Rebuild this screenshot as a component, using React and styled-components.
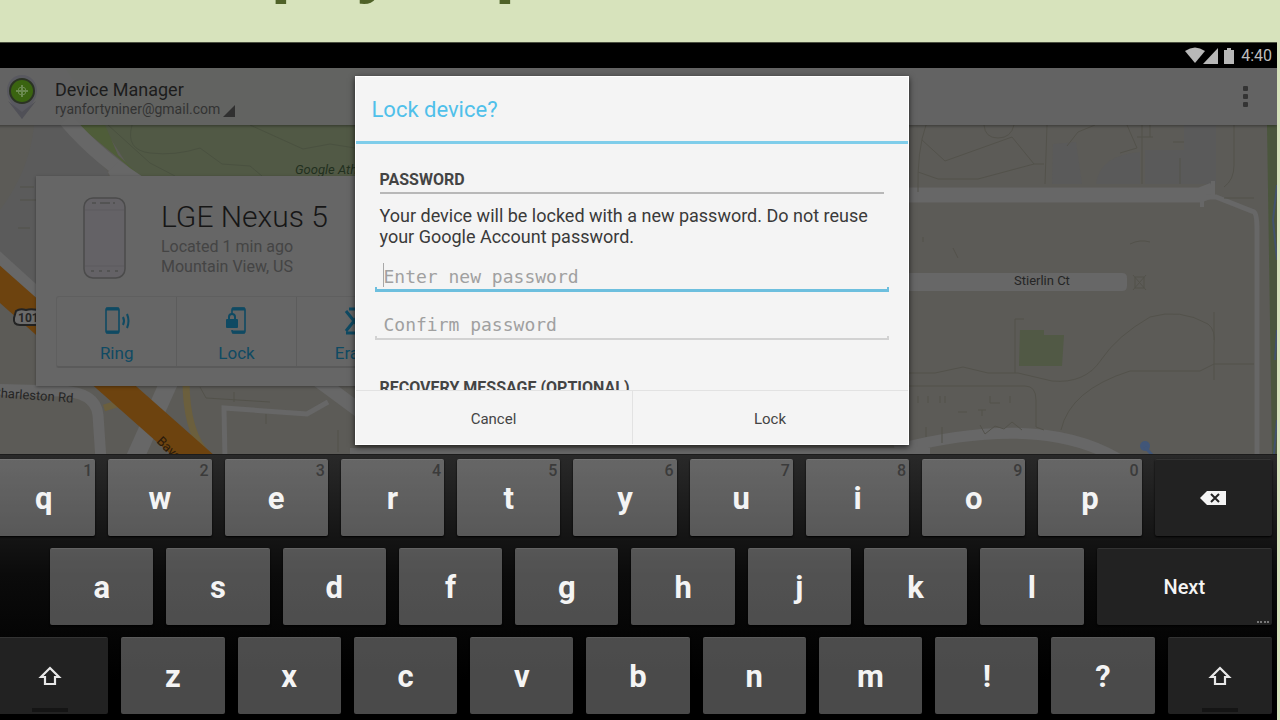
import React from 'react';
import styled, { createGlobalStyle } from 'styled-components';

const colors = {
  page: '#d7e3bc',
  heading: '#4f6228',
  holo: '#4fc0ea',
  land: '#5c5b57',
  road: '#676767',
  park: '#515945',
  path: '#53524b',
  highway: '#6d430f',
  link: '#0f4a63',
};

const GlobalStyle = createGlobalStyle`
  * {
    box-sizing: border-box;
  }
  body {
    margin: 0;
    overflow: hidden;
    background: ${colors.page};
    font-family: Roboto, sans-serif;
  }
  button,
  input {
    margin: 0;
    padding: 0;
    border: 0;
    background: none;
    font-family: inherit;
  }
`;

const Page = styled.div`
  display: flex;
  flex-direction: column;
  height: 100vh;
  overflow: hidden;
`;
const Banner = styled.header`
  flex: 0 0 42px;
  display: flex;
  align-items: flex-start;
  padding-left: 181px;
  overflow: hidden;
`;
const BannerTitle = styled.h1`
  margin: -62px 0 0;
  font-family: 'Open Sans', sans-serif;
  font-size: 55px;
  font-weight: 800;
  line-height: 64px;
  white-space: nowrap;
  color: ${colors.heading};
`;

/* The device runs past the left edge of the slide */
const Device = styled.main`
  flex: 1 1 auto;
  display: flex;
  flex-direction: column;
  margin: 0 3px 0 -14px;
  border-top: 1px solid #4a4f40;
  background: #000;
`;
const StatusBar = styled.div`
  flex: 0 0 25px;
  display: flex;
  align-items: center;
  justify-content: flex-end;
  padding-right: 5px;
  font-size: 16px;
  color: #bdbdbd;
`;
const StatusIcons = styled.svg`
  width: 50px;
  height: 18px;
  margin-right: 6px;
`;

const Screen = styled.section`
  position: relative;
  flex: 0 0 386px;
  overflow: hidden;
  background: ${colors.land};
`;
const MapCanvas = styled.svg`
  position: absolute;
  inset: 0;
  width: 100%;
  height: 100%;
`;
const AppBar = styled.div`
  position: relative;
  display: flex;
  align-items: center;
  height: 57px;
  padding: 0 27px 0 20px;
  background: rgba(100, 100, 100, 0.92);
  box-shadow: 0 1px 3px rgba(0, 0, 0, 0.4);
`;
const PinLogo = styled.svg`
  width: 32px;
  height: 46px;
  margin-right: 17px;
`;
const Account = styled.div`
  flex: 1 1 auto;
  padding-top: 4px;
`;
const AppName = styled.div`
  font-size: 18px;
  line-height: 20px;
  color: #1c1c1c;
`;
const AccountButton = styled.button`
  display: flex;
  align-items: flex-end;
  font-size: 14px;
  line-height: 18px;
  color: #333;
`;
const Spinner = styled.span`
  margin: 0 0 1px 3px;
  border-left: 12px solid transparent;
  border-bottom: 12px solid #303030;
`;
const Overflow = styled.button`
  display: grid;
  gap: 3px;
  padding: 0 2px;
`;
const Dot = styled.span`
  width: 5px;
  height: 5px;
  border-radius: 1px;
  background: #343434;
`;

const DeviceCard = styled.article`
  position: relative;
  width: 400px;
  margin: 51px 0 0 50px;
  padding: 20px 20px 18px;
  background: #666;
  box-shadow: 0 1px 3px rgba(0, 0, 0, 0.35);
`;
const DeviceInfo = styled.div`
  display: flex;
  height: 100px;
  padding-left: 26px;
`;
const PhoneDrawing = styled.svg`
  width: 44px;
  height: 84px;
  margin-right: 35px;
`;
const DeviceName = styled.h2`
  margin: 5px 0 4px;
  font-size: 30px;
  font-weight: 300;
  line-height: 32px;
  color: #161616;
`;
const DeviceMeta = styled.div`
  font-size: 16px;
  line-height: 20px;
  color: #444;
`;
const CardActions = styled.div`
  display: grid;
  grid-template-columns: repeat(3, 1fr);
  height: 72px;
  border: 1px solid #5f5f5f;
  border-bottom: 2px solid #5a5a5a;
  border-radius: 3px;
`;
const CardAction = styled.button`
  display: flex;
  flex-direction: column;
  align-items: center;
  gap: 8px;
  padding-top: 10px;
  font-size: 17px;
  line-height: 20px;
  color: ${colors.link};

  & + & {
    border-left: 1px solid #5c5c5c;
  }
`;
const ActionIcon = styled.svg`
  width: 32px;
  height: 28px;
`;

const Dialog = styled.form`
  position: absolute;
  top: 8px;
  left: 50%;
  width: 554px;
  margin-left: -277px;
  border: 1px solid #fff;
  background: #f4f4f4;
  box-shadow: 0 2px 6px rgba(0, 0, 0, 0.7);
`;
const DialogTitle = styled.h2`
  margin: 0;
  padding: 2px 16px 0;
  border-bottom: 3px solid #7fcdea;
  font-size: 22px;
  font-weight: 400;
  line-height: 62px;
  color: ${colors.holo};
`;
const DialogBody = styled.div`
  height: 246px;
  padding: 25px 24px 0;
  overflow: hidden;
`;
const SectionTitle = styled.h3`
  margin: 0;
  font-size: 16px;
  font-weight: 700;
  line-height: 22px;
  color: #444;
`;
const Rule = styled.hr`
  height: 2px;
  margin: 1px 0 11px;
  border: 0;
  background: #b8b8b8;
`;
const Message = styled.p`
  margin: 0;
  font-size: 18px;
  line-height: 21px;
  color: #3a3a3a;
`;
const Field = styled.label`
  position: relative;
  display: block;
  height: ${props => (props.$active ? '45px' : '48px')};
  margin: 0 -5px;
`;
const HiddenLabel = styled.span`
  position: absolute;
  width: 1px;
  height: 1px;
  overflow: hidden;
  clip-path: inset(50%);
`;
const TextInput = styled.input`
  --line: ${props => (props.$active ? '#6dbfde' : '#d2d2d2')};
  width: 100%;
  height: 100%;
  padding: ${props => (props.$active ? '16px' : '19px')} 9px 0;
  border-bottom: ${props => (props.$active ? '3px' : '2px')} solid var(--line);
  background: linear-gradient(var(--line), var(--line)) left bottom / 2px 2px no-repeat,
    linear-gradient(var(--line), var(--line)) right bottom / 2px 2px no-repeat;
  font-family: 'DejaVu Sans Mono', monospace;
  font-size: 18px;
  outline: none;

  &::placeholder {
    color: #a0a0a0;
    opacity: 1;
  }
`;
const Caret = styled.span`
  position: absolute;
  top: 16px;
  left: 8px;
  width: 1px;
  height: 24px;
  background: #a8a8a8;
`;
const Recovery = styled.div`
  padding-top: 37px;
`;
const DialogActions = styled.div`
  display: grid;
  grid-template-columns: 1fr 1fr;
  height: 54px;
  border-top: 1px solid #e2e2e2;
`;
const DialogButton = styled.button`
  padding-top: 2px;
  font-size: 15px;
  color: #444;

  & + & {
    border-left: 1px solid #e2e2e2;
  }
`;

const Keyboard = styled.section`
  flex: 1 1 auto;
  display: flex;
  flex-direction: column;
  gap: 12px;
  padding: 4px 5px 0 6px;
  border-top: 1px solid #1c1c1c;
  background: linear-gradient(#292929, #0b0b0b 45%, #000 85%);
`;
const KeyRow = styled.div`
  flex: 0 0 77px;
  display: grid;
  grid-template-columns: ${props => props.$columns};
  column-gap: 13px;
`;
const Key = styled.button`
  position: relative;
  display: flex;
  align-items: center;
  justify-content: center;
  border-top: 1px solid rgba(255, 255, 255, 0.08);
  border-radius: 2px;
  background: ${props => (props.$dark ? '#222' : 'rgba(255, 255, 255, 0.29)')};
  box-shadow: 0 1px 2px #000;
  font-size: ${props => (props.$dark ? '20px' : '31px')};
  font-weight: ${props => (props.$dark ? 500 : 700)};
  color: #f4f4f4;
`;
const Hint = styled.span`
  position: absolute;
  top: 1px;
  right: 3px;
  font-size: 16px;
  font-weight: 500;
  line-height: 20px;
  color: #3b3b3b;
`;
const More = styled.span`
  position: absolute;
  right: 3px;
  bottom: 2px;
  width: 12px;
  border-bottom: 2px dotted #777;
`;
const ShiftLight = styled.span`
  position: absolute;
  bottom: 2px;
  left: 50%;
  width: 36px;
  height: 4px;
  margin-left: -18px;
  background: #151515;
`;
const KeyIcon = styled.svg`
  width: 28px;
  height: 24px;
`;

const letterColumns = n => `repeat(${n}, minmax(0, 103fr))`;

const Map = () => (
  <MapCanvas viewBox="-14 68 1291 386" preserveAspectRatio="xMidYMid slice">
    <path d="M34 125H64L108 172V176H36V290L0 255V210Q30 170 34 125Z" fill="#5b5b5b" />
    <path d="M60 60H360V200H150Z" fill={colors.park} />
    <path d="M78 125H105L118 155L140 176Z" fill="#4f5d39" />
    <path d="M108 125L150 163L175 176M132 125Q125 150 150 153T200 148L222 164L250 166L262 176M250 125L303 149L330 144L355 148" fill="none" stroke="#4a5140" />
    <path d="M1053 144L1076 142L1082 184H1052ZM1096 184Q1100 155 1140 152V184ZM1145 150H1184V125H1216V184H1145Z" fill="#5a5a5a" />
    <path d="M66 120Q100 160 150 190" fill="none" stroke={colors.road} strokeWidth="15" />
    <path d="M108 172L112 180H145L118 162Z" fill={colors.road} />
    <g fill="none" stroke={colors.road}>
      <path d="M-14 246L50 304" strokeWidth="11" />
      <path d="M-14 389L60 391Q96 392 98 415L101 460" strokeWidth="11" />
      <path d="M170 380L134 460" strokeWidth="18" />
      <path d="M225 460L224 408L307 414L328 402" strokeWidth="5" />
      <path d="M318 380L364 414" strokeWidth="14" />
      <path d="M895 195H1200L1213 190" strokeWidth="15" />
      <path d="M1206 197H1216L1254 212Q1257 214 1257 230V460" strokeWidth="5" />
      <path d="M1213 181V198M1202 196V207" strokeWidth="4" />
      <path d="M895 450Q1040 412 1120 460" strokeWidth="11" />
      <path d="M350 452H930" strokeWidth="8" />
    </g>
    <path d="M895 273H1122Q1127 273 1127 278V286Q1127 291 1122 291H895Z" fill={colors.road} />
    <path d="M186 380Q186 440 215 462M104 408L130 400" fill="none" stroke="#6b5f3d" strokeWidth="7" />
    <path d="M-14 272L204 465" stroke={colors.highway} strokeWidth="28" />
    <g fill="none" stroke={colors.path}>
      <path d="M926 125Q917 150 918 192M922 140L945 161L1012 137L1034 164H1044M918 172L938 179H978L1034 164M1047 125L1045 184" />
      <path d="M984 125Q985 138 998 138T1014 125M1067 146L1078 132L1095 125M1127 125L1137 148L1120 153M1142 125V184M1150 125V137M1137 137H1153M1180 158V184M1173 142H1184M1234 125V165Q1234 180 1224 187M1224 198H1254" />
      <path d="M908 373H935L963 367L988 373H1018L1052 381Q1085 384 1101 360T1150 317Q1180 308 1208 324Q1216 330 1214 345V380M1214 312V340M1214 364H1254M1015 373V319H1024M1061 430Q1070 390 1130 371H1200L1214 364M908 386H1025Q1036 386 1036 400V427L1044 430" />
      <path d="M1133 275L1146 290M1146 275L1133 290M1135 277H1144V288H1135ZM1130 244Q1140 239 1150 242M923 237V242M953 248L958 258M918 396V403M928 396V403M940 396V403M945 396V403M990 396V403H1000M1010 396V403M958 412H967M978 410H986M982 410V416M926 427V437M942 427V443M980 425L985 434L995 426L1004 429L1012 422L1022 430" />
      <path d="M200 387L206 398L270 402M234 392V402M266 414V424M338 430V452M20 187H34M20 200H36M18 228H30" />
    </g>
    <path d="M1020 330H1044V335H1064L1062 366H1019Z" fill={colors.park} />
    <path d="M1267 125H1277V454H1272Z" fill="#4b563d" />
    <path d="M1277 185L1273 220L1277 260M1277 330L1275 360M1274 454L1277 420" fill="none" stroke="#42526b" strokeWidth="2" />
    <circle cx="1145" cy="446" r="5" fill="#415678" />
    <path d="M1145 447L1153 456" stroke="#415678" strokeWidth="3" />
    <path d="M16 311Q20 308 26 310Q32 308 42 311V325H20Q13 325 14 318Z" fill="#6b6b6b" stroke="#232323" strokeWidth="2" />
    <g fontFamily="Roboto, sans-serif" fontSize="13" fill="#252525">
      <text x="18" y="322" fontSize="12" fontWeight="700">101</text>
      <text x="295" y="174" fontStyle="italic" fill="#22301f">Google Athletic</text>
      <text x="1014" y="285">Stierlin Ct</text>
      <text transform="translate(-8 397) rotate(4)">Charleston Rd</text>
      <text transform="translate(156 442) rotate(44)" fill="#2b1a0a">Bayshore Fwy</text>
    </g>
  </MapCanvas>
);

const ShiftIcon = () => (
  <KeyIcon viewBox="0 0 28 24">
    <path d="M14 4L23 13H19V20H9V13H5Z" fill="none" stroke="#e8e8e8" strokeWidth="2.2" />
  </KeyIcon>
);

const BackspaceIcon = () => (
  <KeyIcon viewBox="0 0 28 24">
    <path d="M1 12L8 5H27V19H8Z" fill="#f4f4f4" />
    <path d="M12 8L20 16M20 8L12 16" stroke="#222" strokeWidth="2" />
  </KeyIcon>
);

const Letters = ({ keys, hints = [] }) =>
  keys.split('').map((letter, index) => (
    <Key key={letter} type="button">
      {letter}
      {hints[index] && <Hint>{hints[index]}</Hint>}
    </Key>
  ));

const App = () => (
  <Page>
    <GlobalStyle />
    <Banner>
      <BannerTitle>Step by Step</BannerTitle>
    </Banner>
    <Device>
      <StatusBar>
        <StatusIcons viewBox="0 0 50 18" fill="#b8b8b8">
          <path d="M0 4Q10 -3 20 4L10 16Z" />
          <path d="M33 1V17H18Z" />
          <path d="M39 3H42V1H46V3H49V17H39Z" />
        </StatusIcons>
        4:40
      </StatusBar>
      <Screen>
        <Map />
        <AppBar>
          <PinLogo viewBox="0 0 32 46">
            <path d="M16 1C7 1 1 8 1 17C1 28 11 33 16 45C21 33 31 28 31 17C31 8 25 1 16 1Z" fill="#595960" />
            <path d="M2 27L16 38L30 27L16 45Z" fill="#505057" />
            <circle cx="16" cy="17" r="12" fill="#3a6410" stroke="#2b3324" strokeWidth="2" />
            <path d="M16 11V23M10 17H22" stroke="#6b8a50" strokeWidth="2" />
            <circle cx="16" cy="17" r="4" fill="none" stroke="#6b8a50" strokeWidth="1" />
          </PinLogo>
          <Account>
            <AppName>Device Manager</AppName>
            <AccountButton type="button">
              ryanfortyniner@gmail.com
              <Spinner />
            </AccountButton>
          </Account>
          <Overflow type="button" aria-label="More options">
            <Dot />
            <Dot />
            <Dot />
          </Overflow>
        </AppBar>
        <DeviceCard>
          <DeviceInfo>
            <PhoneDrawing viewBox="0 0 44 84" fill="none" stroke="#4b4b4b">
              <rect x="2" y="2" width="41" height="80" rx="9" fill="#646266" strokeWidth="1.5" />
              <path d="M3 14H42M3 70H42" stroke="#5d5b5f" />
              <path d="M10 7H14M18 7H28M31 7H33M9 75H12M17 75H20M25 75H28M33 75H36" strokeWidth="2" stroke="#535353" />
            </PhoneDrawing>
            <div>
              <DeviceName>LGE Nexus 5</DeviceName>
              <DeviceMeta>Located 1 min ago</DeviceMeta>
              <DeviceMeta>Mountain View, US</DeviceMeta>
            </div>
          </DeviceInfo>
          <CardActions>
            <CardAction type="button">
              <ActionIcon viewBox="0 0 32 28" fill="none" stroke={colors.link} strokeWidth="1.6">
                <rect x="5" y="1" width="13" height="25" rx="2" />
                <path d="M5 2H18M5 25H18" strokeWidth="3" />
                <path d="M22 10Q24 14 22 18M26 7Q29 14 26 21" strokeWidth="2" />
              </ActionIcon>
              Ring
            </CardAction>
            <CardAction type="button">
              <ActionIcon viewBox="0 0 32 28" fill="none" stroke={colors.link} strokeWidth="1.6">
                <path d="M12 7V3Q12 1 14 1H23Q25 1 25 3V24Q25 26 23 26H14Q12 26 12 23" />
                <path d="M12 2H25M12 25H25" strokeWidth="3" />
                <path d="M9 13V10Q9 7 12 7T15 10V13" strokeWidth="2" />
                <rect x="6" y="12" width="12" height="9" rx="1" fill={colors.link} stroke="none" />
              </ActionIcon>
              Lock
            </CardAction>
            <CardAction type="button">
              <ActionIcon viewBox="0 0 32 28" fill="none" stroke={colors.link} strokeWidth="3">
                <path d="M6 4L22 24M6 24L22 4M6 26H24M9 2H24" />
              </ActionIcon>
              Erase
            </CardAction>
          </CardActions>
        </DeviceCard>
        <Dialog>
          <DialogTitle>Lock device?</DialogTitle>
          <DialogBody>
            <SectionTitle>PASSWORD</SectionTitle>
            <Rule />
            <Message>
              Your device will be locked with a new password. Do not reuse your Google Account
              password.
            </Message>
            <Field $active>
              <HiddenLabel>New password</HiddenLabel>
              <TextInput $active type="password" placeholder="Enter new password" />
              <Caret />
            </Field>
            <Field>
              <HiddenLabel>Confirm</HiddenLabel>
              <TextInput type="password" placeholder="Confirm password" />
            </Field>
            <Recovery>
              <SectionTitle>RECOVERY MESSAGE (OPTIONAL)</SectionTitle>
            </Recovery>
          </DialogBody>
          <DialogActions>
            <DialogButton type="button">Cancel</DialogButton>
            <DialogButton type="button">Lock</DialogButton>
          </DialogActions>
        </Dialog>
      </Screen>
      <Keyboard>
        <KeyRow $columns={`${letterColumns(10)} 117fr`}>
          <Letters keys="qwertyuiop" hints="1234567890" />
          <Key $dark type="button" aria-label="Backspace">
            <BackspaceIcon />
          </Key>
        </KeyRow>
        <KeyRow $columns={`45fr ${letterColumns(9)} 175fr`}>
          <span />
          <Letters keys="asdfghjkl" />
          <Key $dark type="button">
            Next
            <More />
          </Key>
        </KeyRow>
        <KeyRow $columns={`116fr ${letterColumns(9)} 104fr`}>
          <Key $dark type="button" aria-label="Shift">
            <ShiftIcon />
            <ShiftLight />
          </Key>
          <Letters keys="zxcvbnm!?" />
          <Key $dark type="button" aria-label="Shift">
            <ShiftIcon />
            <ShiftLight />
          </Key>
        </KeyRow>
      </Keyboard>
    </Device>
  </Page>
);

export default App;
